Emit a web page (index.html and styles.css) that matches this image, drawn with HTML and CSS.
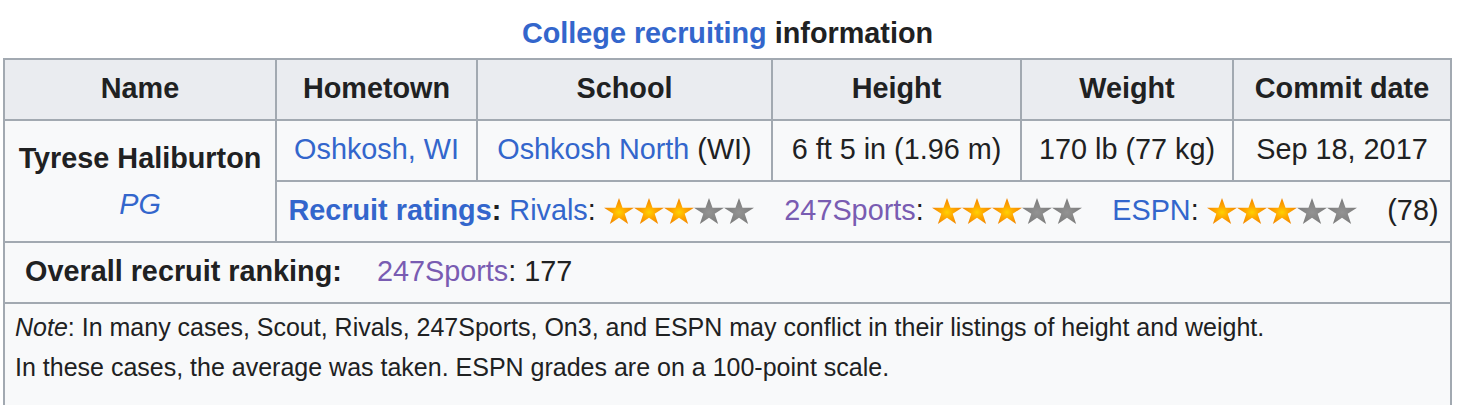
FILE: index.html
```html
<!DOCTYPE html>
<html lang="en">
<head>
<meta charset="utf-8">
<title>College recruiting information</title>
<link rel="stylesheet" href="styles.css">
</head>
<body>
<svg class="defs" width="0" height="0" aria-hidden="true">
  <defs>
    <radialGradient id="goldGrad" cx="50%" cy="55%" r="50%">
      <stop offset="0" stop-color="#ffd200"/>
      <stop offset="0.45" stop-color="#ffa800"/>
      <stop offset="1" stop-color="#f28800"/>
    </radialGradient>
    <radialGradient id="greyGrad" cx="50%" cy="55%" r="50%">
      <stop offset="0" stop-color="#939393"/>
      <stop offset="1" stop-color="#7c7c7c"/>
    </radialGradient>
    <symbol id="star" viewBox="0 0 100 92" preserveAspectRatio="none">
      <polygon points="50,0 61.8,34.5 100,34.5 69,56 80.5,92 50,69.5 19.5,92 31,56 0,34.5 38.2,34.5"/>
    </symbol>
  </defs>
</svg>
<div class="page">
<table class="recruit">
  <caption><a class="link" href="#">College recruiting</a> information</caption>
  <colgroup>
    <col class="col-name"><col class="col-home"><col class="col-school"><col class="col-height"><col class="col-weight"><col class="col-date">
  </colgroup>
  <thead>
    <tr><th>Name</th><th>Hometown</th><th>School</th><th>Height</th><th>Weight</th><th>Commit date</th></tr>
  </thead>
  <tbody>
    <tr>
      <td rowspan="2" class="name"><b>Tyrese Haliburton</b><br><a class="link pos" href="#">PG</a></td>
      <td><a class="link" href="#">Oshkosh, WI</a></td>
      <td><a class="link" href="#">Oshkosh North</a> (WI)</td>
      <td>6&nbsp;ft 5&nbsp;in (1.96&nbsp;m)</td>
      <td>170&nbsp;lb (77&nbsp;kg)</td>
      <td>Sep 18, 2017</td>
    </tr>
    <tr>
      <td colspan="5" class="ratings">
        <div class="ratings-row">
          <span class="rgroup"><b><a class="link" href="#">Recruit ratings</a>:</b>&nbsp;<a class="link" href="#">Rivals</a>:&nbsp;<span class="stars"><svg class="star on"><use href="#star"/></svg><svg class="star on"><use href="#star"/></svg><svg class="star on"><use href="#star"/></svg><svg class="star off"><use href="#star"/></svg><svg class="star off"><use href="#star"/></svg></span></span>
          <span class="rgroup"><a class="link visited" href="#">247Sports</a>:&nbsp;<span class="stars"><svg class="star on"><use href="#star"/></svg><svg class="star on"><use href="#star"/></svg><svg class="star on"><use href="#star"/></svg><svg class="star off"><use href="#star"/></svg><svg class="star off"><use href="#star"/></svg></span></span>
          <span class="rgroup"><a class="link" href="#">ESPN</a>:&nbsp;<span class="stars"><svg class="star on"><use href="#star"/></svg><svg class="star on"><use href="#star"/></svg><svg class="star on"><use href="#star"/></svg><svg class="star off"><use href="#star"/></svg><svg class="star off"><use href="#star"/></svg></span></span>
          <span class="rgroup">(78)</span>
        </div>
      </td>
    </tr>
    <tr>
      <td colspan="6" class="overall"><b class="overall-label">Overall recruit ranking:</b><span class="overall-val"><a class="link visited" href="#">247Sports</a>: 177</span></td>
    </tr>
    <tr>
      <td colspan="6" class="note"><i>Note</i>: In many cases, Scout, Rivals, 247Sports, On3, and ESPN may conflict in their listings of height and weight.<br>In these cases, the average was taken. ESPN grades are on a 100-point scale.</td>
    </tr>
  </tbody>
</table>
</div>
</body>
</html>
```

FILE: styles.css
```css
html, body {
  margin: 0;
  padding: 0;
  background: #ffffff;
}

body {
  font-family: "Liberation Sans", Arial, Helvetica, sans-serif;
  color: #202122;
  font-size: 28.8px;
}

.defs {
  position: absolute;
  width: 0;
  height: 0;
  overflow: hidden;
}

.page {
  padding: 10px 0 0 3px;
}

.link {
  color: #3366cc;
  text-decoration: none;
}

.link.visited {
  color: #795cb2;
}

.recruit {
  border-collapse: collapse;
  table-layout: fixed;
  width: 1447px;
  background: #f8f9fa;
  border: 2px solid #a2a9b1;
}

.recruit caption {
  font-weight: bold;
  line-height: 46px;
  text-align: center;
  padding: 0 0 2px;
}

.col-name { width: 272px; }
.col-home { width: 201px; }
.col-school { width: 295px; }
.col-height { width: 249px; }
.col-weight { width: 212px; }
.col-date { width: 218px; }

.recruit th,
.recruit td {
  border: 2px solid #a2a9b1;
  padding: 5px 11.5px 8px;
  line-height: 46px;
  text-align: center;
  white-space: nowrap;
}

.recruit th {
  background: #eaecf0;
  font-weight: bold;
}

.recruit td.name {
  vertical-align: middle;
  padding-top: 6.5px;
  padding-bottom: 6.5px;
}

.pos {
  font-style: italic;
}

.ratings-row {
  display: flex;
  justify-content: space-between;
  align-items: center;
  height: 46px;
}

.rgroup {
  display: inline-block;
  white-space: nowrap;
}

.stars {
  display: inline-flex;
  vertical-align: middle;
  position: relative;
  top: -1px;
}

.star {
  width: 30px;
  height: 26px;
  display: block;
}

.star.on { fill: url(#goldGrad); }
.star.off { fill: url(#greyGrad); }

.recruit td.overall {
  text-align: left;
  padding-left: 20px;
}

.overall-val {
  margin-left: 35px;
}

.recruit td.note {
  text-align: left;
  font-size: 25px;
  line-height: 40px;
  padding: 3px 10px 30px;
}
```
